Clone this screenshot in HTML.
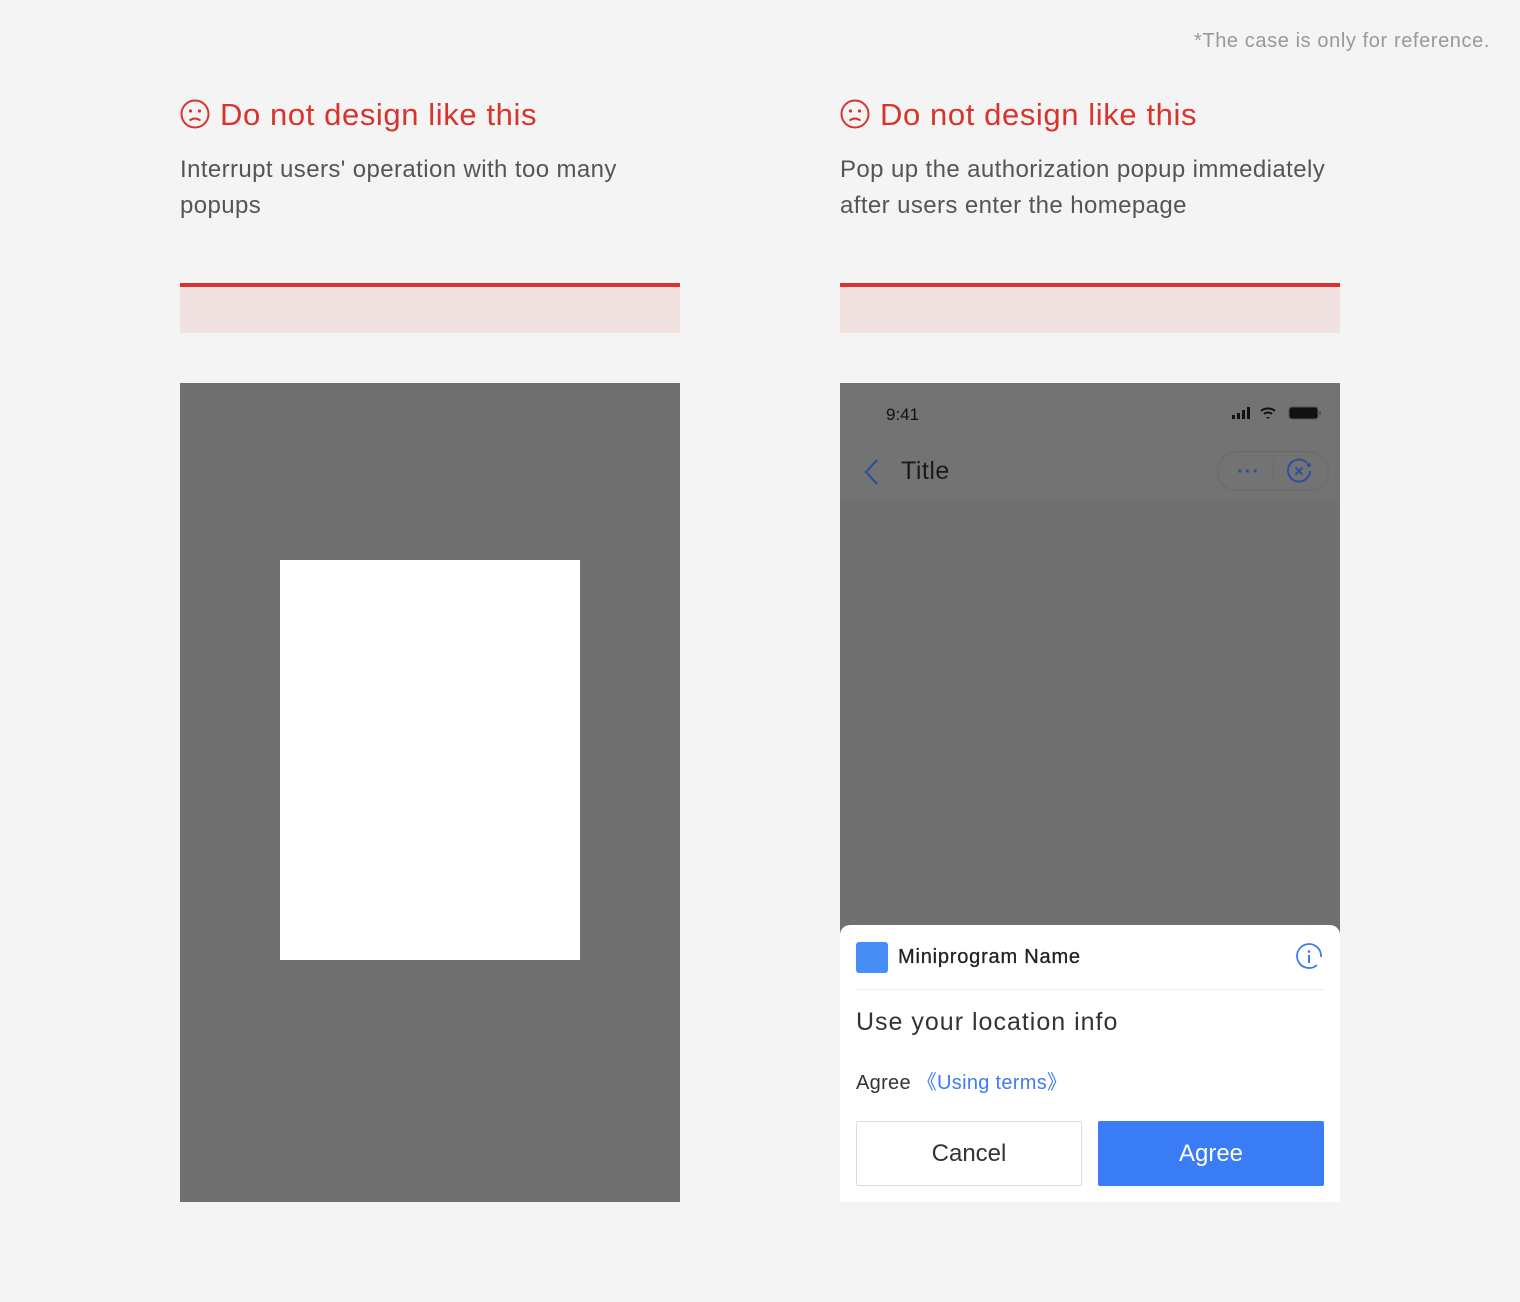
<!DOCTYPE html>
<html><head><meta charset="utf-8"><style>
*{margin:0;padding:0;box-sizing:border-box}
body{width:1520px;height:1302px;background:#f4f4f4;font-family:"Liberation Sans",sans-serif;position:relative;overflow:hidden}
.abs{position:absolute}
.note{right:30px;top:30px;font-size:20px;color:#999;letter-spacing:0.6px}
.h{font-size:31px;color:#d9342b;top:97px;white-space:nowrap;letter-spacing:0.6px}
.d{font-size:24px;color:#555;line-height:36px;top:152px;letter-spacing:0.4px}
.bar{height:50px;width:500px;top:283px;background:#f2e1e1;border-top:4px solid #d9342b}
.ph{top:383px;width:500px;height:819px;background:#707070;overflow:hidden}
</style></head><body>
<div class="abs note">*The case is only for reference.</div>

<div class="abs h" style="left:180px"><svg width="30" height="30" viewBox="0 0 30 30" style="vertical-align:-4px;margin-right:10px"><circle cx="15" cy="15" r="13.5" fill="none" stroke="#d9342b" stroke-width="2"/><circle cx="10.5" cy="12" r="1.6" fill="#d9342b"/><circle cx="19.5" cy="12" r="1.6" fill="#d9342b"/><path d="M9.5 21.5q5.5-4 11 0" fill="none" stroke="#d9342b" stroke-width="2"/></svg>Do not design like this</div>
<div class="abs d" style="left:180px;width:470px">Interrupt users' operation with too many popups</div>
<div class="abs bar" style="left:180px"></div>
<div class="abs ph" style="left:180px"><div class="abs" style="left:100px;top:177px;width:300px;height:400px;background:#fff"></div></div>

<div class="abs h" style="left:840px"><svg width="30" height="30" viewBox="0 0 30 30" style="vertical-align:-4px;margin-right:10px"><circle cx="15" cy="15" r="13.5" fill="none" stroke="#d9342b" stroke-width="2"/><circle cx="10.5" cy="12" r="1.6" fill="#d9342b"/><circle cx="19.5" cy="12" r="1.6" fill="#d9342b"/><path d="M9.5 21.5q5.5-4 11 0" fill="none" stroke="#d9342b" stroke-width="2"/></svg>Do not design like this</div>
<div class="abs d" style="left:840px;width:510px">Pop up the authorization popup immediately after users enter the homepage</div>
<div class="abs bar" style="left:840px"></div>
<div class="abs ph" style="left:840px">
  <div class="abs" style="left:0;top:0;width:500px;height:117px;background:#737373"></div>
  <div class="abs" style="left:46px;top:22px;font-size:17px;color:#111">9:41</div>
  <svg class="abs" style="left:390px;top:22px" width="95" height="16" viewBox="0 0 95 16"><rect x="2" y="10" width="3" height="4" fill="#111"/><rect x="7" y="8" width="3" height="6" fill="#111"/><rect x="12" y="5" width="3" height="9" fill="#111"/><rect x="17" y="2" width="3" height="12" fill="#111"/><path d="M31 6a11 11 0 0 1 14 0M34 9a6 6 0 0 1 8 0" stroke="#111" stroke-width="2" fill="none"/><path d="M36 12l2 2 2-2z" fill="#111"/><rect x="59" y="2" width="29" height="12" rx="3" fill="#111" stroke="#555"/><rect x="89" y="6" width="2" height="4" fill="#555"/></svg>
  <svg class="abs" style="left:22px;top:75px" width="18" height="28" viewBox="0 0 18 28"><path d="M15 2L4 14l11 12" fill="none" stroke="#2a4fa0" stroke-width="2.2"/></svg>
  <div class="abs" style="left:61px;top:74px;font-size:25px;color:#1a1a1a;letter-spacing:0.5px">Title</div>
  <div class="abs" style="left:377px;top:68px;width:112px;height:40px;border:1px solid #6a6a6a;border-radius:20px"></div>
  <div class="abs" style="left:433px;top:76px;width:1px;height:24px;background:#6a6a6a"></div>
  <div class="abs" style="left:397px;top:78px;font-size:20px;color:#2a4fa0;letter-spacing:1px;font-weight:bold">···</div>
  <svg class="abs" style="left:445px;top:74px" width="28" height="28" viewBox="0 0 28 28"><path d="M22 6A11 11 0 1 0 25 14" fill="none" stroke="#2a4fa0" stroke-width="2"/><circle cx="24" cy="8" r="2" fill="#2a4fa0"/><path d="M10.5 10.5l7 7M17.5 10.5l-7 7" stroke="#2a4fa0" stroke-width="2"/></svg>
  <div class="abs" style="left:0;top:542px;width:500px;height:290px;background:#fff;border-radius:10px 10px 0 0">
    <div class="abs" style="left:16px;top:17px;width:32px;height:31px;background:#468ef6;border-radius:3px"></div>
    <div class="abs" style="left:58px;top:21px;font-size:20px;color:#222;letter-spacing:0.8px;-webkit-text-stroke:0.3px #222">Miniprogram Name</div>
    <svg class="abs" style="left:455px;top:18px" width="28" height="28" viewBox="0 0 28 28"><path d="M22 22A12 12 0 1 1 26 14" fill="none" stroke="#3d7cf2" stroke-width="1.8"/><circle cx="14" cy="8.5" r="1.3" fill="#3d7cf2"/><path d="M14 12v8" stroke="#3d7cf2" stroke-width="2"/></svg>
    <div class="abs" style="left:16px;top:64px;width:468px;height:1px;background:#eee"></div>
    <div class="abs" style="left:16px;top:83px;font-size:25px;color:#333;letter-spacing:1px">Use your location info</div>
    <div class="abs" style="left:16px;top:141px;font-size:20px;color:#333;letter-spacing:0.3px">Agree <span style="color:#3d7cf2">《Using terms》</span></div>
    <div class="abs" style="left:16px;top:196px;width:226px;height:65px;border:1px solid #ddd;border-radius:2px;font-size:24px;color:#333;text-align:center;line-height:63px">Cancel</div>
    <div class="abs" style="left:258px;top:196px;width:226px;height:65px;background:#3a7cf5;border-radius:2px;font-size:24px;color:#fff;text-align:center;line-height:65px">Agree</div>
  </div>
</div>
</body></html>
